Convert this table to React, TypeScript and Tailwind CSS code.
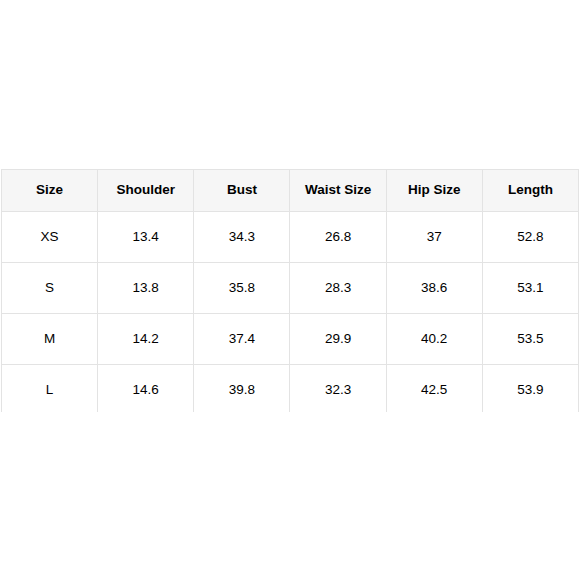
import React from "react";

const headers = ["Size", "Shoulder", "Bust", "Waist Size", "Hip Size", "Length"];
const rows = [
  ["XS", "13.4", "34.3", "26.8", "37", "52.8"],
  ["S", "13.8", "35.8", "28.3", "38.6", "53.1"],
  ["M", "14.2", "37.4", "29.9", "40.2", "53.5"],
  ["L", "14.6", "39.8", "32.3", "42.5", "53.9"],
];

export default function App() {
  return (
    <div className="w-[580px] h-[580px] bg-white pt-[169px] pl-[1px]" style={{ fontFamily: '"Liberation Sans", Arial, sans-serif' }}>
      <div className="w-[578px] h-[243px] overflow-hidden">
        <table className="w-[578px] border-collapse table-fixed text-[13.5px] text-black">
          <thead>
            <tr className="h-[42px] bg-[#f6f6f6]">
              {headers.map((h) => (
                <th key={h} className="border border-[#e3e3e3] font-bold text-center align-middle">
                  {h}
                </th>
              ))}
            </tr>
          </thead>
          <tbody>
            {rows.map((r, i) => (
              <tr key={i} className="h-[51px]">
                {r.map((c, j) => (
                  <td key={j} className="border border-[#e3e3e3] text-center align-middle">
                    {c}
                  </td>
                ))}
              </tr>
            ))}
          </tbody>
        </table>
      </div>
    </div>
  );
}
